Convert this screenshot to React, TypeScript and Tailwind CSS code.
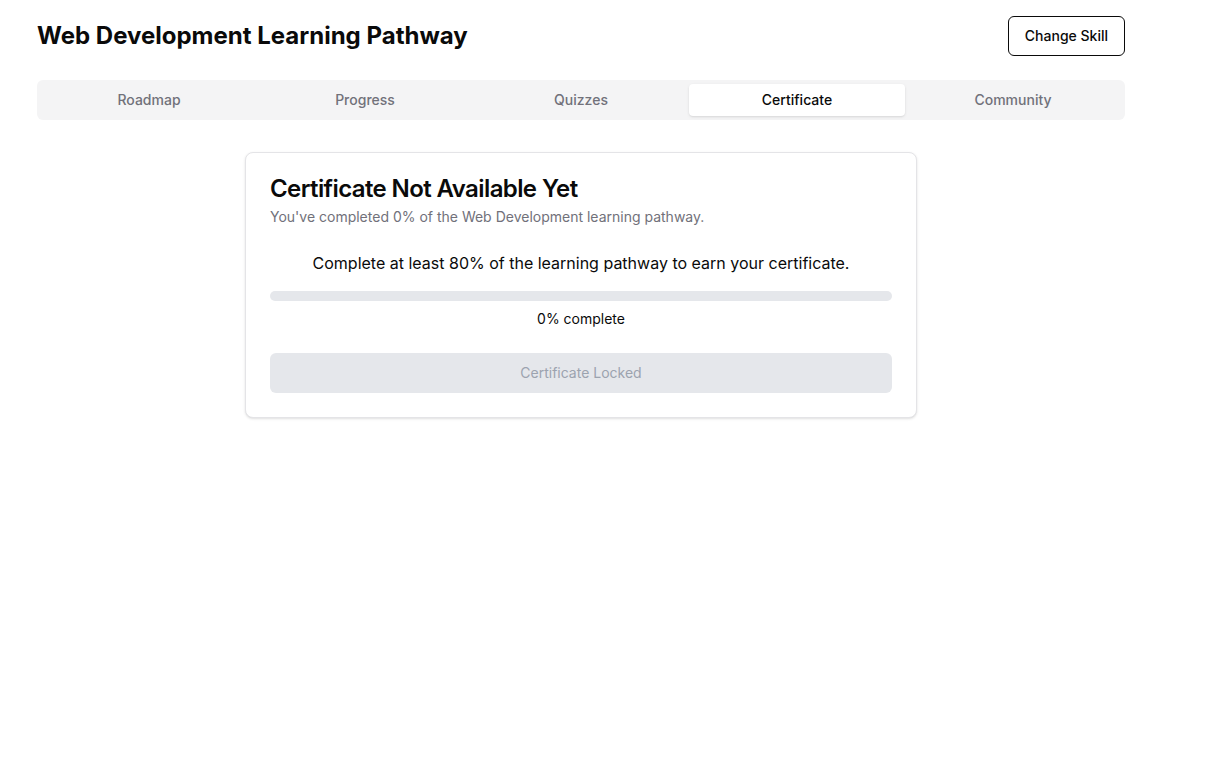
import React from "react";

export default function App() {
  const tabs = ["Roadmap", "Progress", "Quizzes", "Certificate", "Community"];
  const active = "Certificate";
  return (
    <div className="min-h-screen bg-white text-[#0a0a0a]" style={{ fontFamily: "Inter, 'Noto Sans', sans-serif" }}>
      <div className="ml-[37px] w-[1088px] pt-4">
        <div className="flex items-center justify-between">
          <h1 className="text-2xl font-bold">Web Development Learning Pathway</h1>
          <button className="h-10 rounded-md border border-[#0a0a0a] bg-white px-4 text-sm font-medium">Change Skill</button>
        </div>
        <div className="mt-6 grid h-10 grid-cols-5 rounded-md bg-[#f4f4f5] p-1">
          {tabs.map((t) => (
            <div
              key={t}
              className={
                t === active
                  ? "flex items-center justify-center rounded-sm bg-white text-sm font-medium text-[#0a0a0a] shadow-sm"
                  : "flex items-center justify-center rounded-sm text-sm font-medium text-[#71717a]"
              }
            >
              {t}
            </div>
          ))}
        </div>
        <div className="mx-auto mt-8 w-[672px] rounded-lg border border-[#e4e4e7] bg-white shadow-sm">
          <div className="flex flex-col gap-1.5 p-6">
            <h2 className="text-2xl font-semibold leading-none tracking-tight">Certificate Not Available Yet</h2>
            <p className="text-sm text-[#71717a]">You've completed 0% of the Web Development learning pathway.</p>
          </div>
          <div className="px-6 pb-6">
            <p className="text-center text-base">Complete at least 80% of the learning pathway to earn your certificate.</p>
            <div className="mt-4 h-2.5 w-full rounded-full bg-[#e5e7eb]"></div>
            <p className="mt-2 text-center text-sm">0% complete</p>
            <button className="mt-6 flex h-10 w-full items-center justify-center rounded-md bg-[#e5e7eb] text-sm text-[#9ca3af]">
              Certificate Locked
            </button>
          </div>
        </div>
      </div>
    </div>
  );
}
